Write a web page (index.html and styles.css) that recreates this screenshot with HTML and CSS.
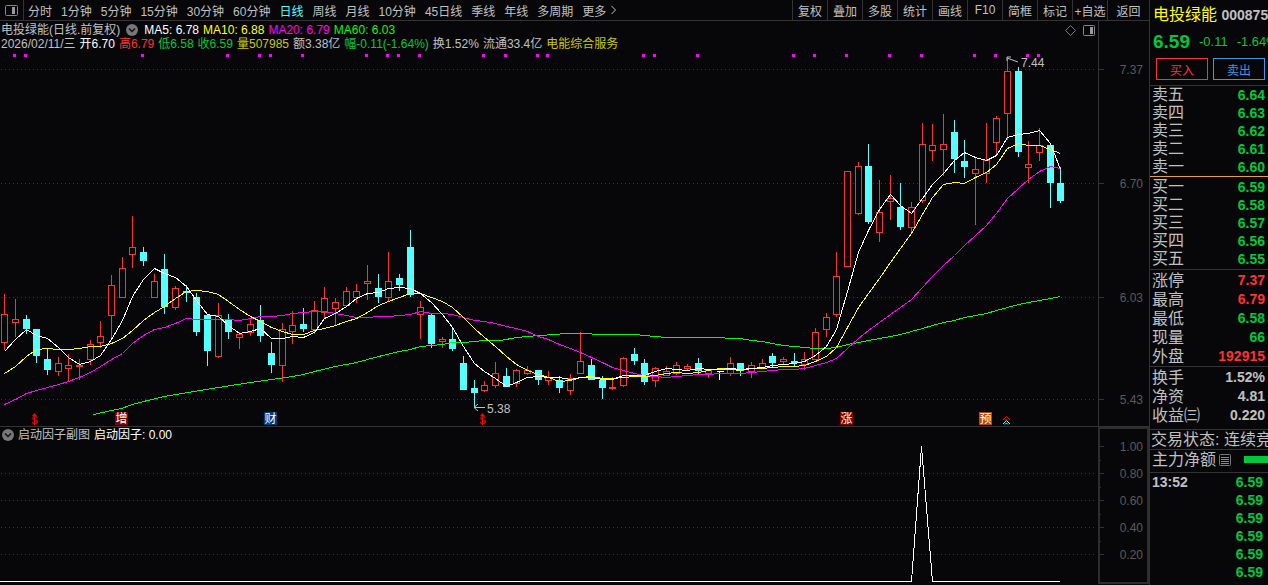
FILE: index.html
```html
<!DOCTYPE html>
<html lang="zh-CN">
<head>
<meta charset="UTF-8">
<meta name="viewport" content="width=device-width, initial-scale=1.0">
<title>电投绿能 000875</title>
<link rel="stylesheet" href="styles.css">
</head>

<body>
    <main>
        <nav class="toolbar">
            <button class="panel-toggle" aria-label="侧栏">
                <svg width="13" height="11" viewBox="0 0 13 11"><rect x="0.5" y="0.5" width="12" height="10" rx="1" fill="none" stroke="#888"/><rect x="7" y="2" width="3" height="7" fill="#999"/></svg>
            </button>
            <div class="periods">
                <button>分时</button>
                <button>1分钟</button>
                <button>5分钟</button>
                <button>15分钟</button>
                <button>30分钟</button>
                <button>60分钟</button>
                <button class="active">日线</button>
                <button>周线</button>
                <button>月线</button>
                <button>10分钟</button>
                <button>45日线</button>
                <button>季线</button>
                <button>年线</button>
                <button>多周期</button>
                <button>更多 <svg width="7" height="10" viewBox="0 0 7 10"><path d="M1.5 1L5.5 5L1.5 9" fill="none" stroke="#c0c0c0"/></svg></button>
            </div>
            <div class="tools">
                <button>复权</button>
                <button>叠加</button>
                <button>多股</button>
                <button>统计</button>
                <button>画线</button>
                <button>F10</button>
                <button>简框</button>
                <button>标记</button>
                <button>+自选</button>
                <button class="back">返回</button>
            </div>
        </nav>

        <section class="panel price-panel">
            <div class="plot">
                <div class="info">
                    <div class="info-row averages">
                        <span>电投绿能(日线.前复权)</span>
                        <svg class="chevron" width="12" height="12" viewBox="0 0 12 12"><circle cx="6" cy="6" r="6" fill="#777"/><path d="M3 4.5L6 7.5L9 4.5" fill="none" stroke="#111" stroke-width="1.5"/></svg>
                        <span class="white">MA5: 6.78</span>
                        <span class="yellow">MA10: 6.88</span>
                        <span class="magenta">MA20: 6.79</span>
                        <span class="lime">MA60: 6.03</span>
                        <span class="corner">
                            <svg width="11" height="11" viewBox="0 0 11 11"><path d="M5.5 0.5L10.5 5.5L5.5 10.5L0.5 5.5Z" fill="none" stroke="#777"/></svg>
                            <svg width="12" height="11" viewBox="0 0 12 11"><rect x="0.5" y="0.5" width="11" height="10" rx="1" fill="none" stroke="#888"/><rect x="7" y="2" width="3" height="7" fill="#999"/></svg>
                        </span>
                    </div>
                    <div class="info-row">
                        <span>2026/02/11/三</span>
                        <span class="white">开6.70</span>
                        <span class="red">高6.79</span>
                        <span class="green">低6.58</span>
                        <span class="green">收6.59</span>
                        <span class="gold">量507985</span>
                        <span>额3.38亿</span>
                        <span class="green">幅-0.11(-1.64%)</span>
                        <span>换1.52%</span>
                        <span>流通33.4亿</span>
                        <span class="gold">电能综合服务</span>
                    </div>
                </div>
                <svg class="chart" viewBox="0 51 1098 375">
                    <g class="grid">
                        <path d="M1 69.5H1095M1 183.5H1095M1 297.5H1095M1 399.5H1095"/>
                    </g>
                    <g id="events"></g>
                    <g id="candles"></g>
                    <g id="averages"></g>

                    <g class="note">
                        <path d="M1018 62L1007 58M1007 61V57H1011"/>
                        <text x="1021" y="67">7.44</text>
                        <path d="M485 407.5H474M478 404L474 407.5L478 411"/>
                        <text x="487" y="413">5.38</text>
                    </g>

                    <!-- event marks -->
                    <g class="dollar">
                        <path d="M34.5 413L37 416H32Z"/>
                        <text x="34.5" y="424">S</text>
                        <path d="M34 416h1v9h-1z"/>
                        <path d="M482.5 413L485 416H480Z"/>
                        <text x="482.5" y="424">S</text>
                        <path d="M482 416h1v9h-1z"/>
                    </g>
                    <g class="mark">
                        <rect x="115" y="412" width="13" height="13" fill="#800000"/>
                        <text x="121.5" y="423">增</text>
                        <rect x="264" y="412" width="13" height="13" fill="#003c78"/>
                        <text x="270.5" y="423">财</text>
                        <rect x="840" y="412" width="13" height="13" fill="#800000"/>
                        <text x="846.5" y="423">涨</text>
                        <rect x="979" y="412" width="13" height="13" fill="#b8430d"/>
                        <text x="985.5" y="423">预</text>
                    </g>
                    <path d="M1003 420L1006.5 416.5L1010 420M1005 420.5L1006.5 419L1008 420.5" fill="none" stroke="#f00"/>
                    <path d="M1003 424L1006.5 420.5L1010 424M1005 424.5L1006.5 423L1008 424.5" fill="none" stroke="#54ffff"/>
                </svg>
            </div>
            <div class="axis">
                <svg viewBox="1099 21 50 405">
                    <path class="tick" d="M1099 69.5h5M1099 183.5h5M1099 297.5h5M1099 399.5h5"/>
                    <text x="1143" y="74">7.37</text>
                    <text x="1143" y="188">6.70</text>
                    <text x="1143" y="302">6.03</text>
                    <text x="1143" y="404">5.43</text>
                </svg>
            </div>
        </section>

        <section class="panel sub-panel">
            <div class="plot">
                <div class="info-row averages">
                    <svg class="chevron" width="12" height="12" viewBox="0 0 12 12"><circle cx="6" cy="6" r="6" fill="#777"/><path d="M3 4.5L6 7.5L9 4.5" fill="none" stroke="#111" stroke-width="1.5"/></svg>
                    <span>启动因子副图</span>
                    <span class="white">启动因子: 0.00</span>
                </div>
                <svg class="chart" viewBox="0 443 1098 142">
                    <g class="grid">
                        <path d="M1 473.5H1095M1 500.5H1095M1 527.5H1095M1 554.5H1095"/>
                    </g>
                    <polyline class="line ma5" points="0,581.5 911.5,581.5 921.5,446.5 932.5,581.5 1060,581.5"/>
                </svg>
            </div>
            <div class="axis boxed">
                <svg viewBox="1100 429 47 153">
                    <path class="tick" d="M1100 446.5h4M1100 473.5h4M1100 500.5h4M1100 527.5h4M1100 554.5h4M1100 460.5h1M1100 487.5h1M1100 514.5h1M1100 541.5h1"/>
                    <text x="1143" y="451">1.00</text>
                    <text x="1143" y="478">0.80</text>
                    <text x="1143" y="505">0.60</text>
                    <text x="1143" y="532">0.40</text>
                    <text x="1143" y="559">0.20</text>
                </svg>
            </div>
        </section>
    </main>

    <aside>
        <header>
            <h1>电投绿能 <b>000875</b></h1>
            <p class="quote green"><b>6.59</b><span>-0.11</span><span>-1.64%</span></p>
            <div class="trade">
                <button class="buy">买入</button>
                <button class="sell">卖出</button>
            </div>
        </header>
        <table class="asks">
            <tr><th>卖五</th><td>6.64</td></tr>
            <tr><th>卖四</th><td>6.63</td></tr>
            <tr><th>卖三</th><td>6.62</td></tr>
            <tr><th>卖二</th><td>6.61</td></tr>
            <tr><th>卖一</th><td>6.60</td></tr>
        </table>
        <div class="block">
            <table>
                <tr><th>买一</th><td>6.59</td></tr>
                <tr><th>买二</th><td>6.58</td></tr>
                <tr><th>买三</th><td>6.57</td></tr>
                <tr><th>买四</th><td>6.56</td></tr>
                <tr><th>买五</th><td>6.55</td></tr>
            </table>
        </div>
        <table class="stats">
            <tr><th>涨停</th><td class="red">7.37</td></tr>
            <tr><th>最高</th><td class="red">6.79</td></tr>
            <tr><th>最低</th><td>6.58</td></tr>
            <tr><th>现量</th><td>66</td></tr>
            <tr><th>外盘</th><td class="red">192915</td></tr>
        </table>
        <div class="block ratios">
            <table class="stats">
                <tr><th>换手</th><td class="plain">1.52%</td></tr>
                <tr><th>净资</th><td class="plain">4.81</td></tr>
                <tr><th>收益㈢</th><td class="plain">0.220</td></tr>
            </table>
        </div>
        <p class="status">交易状态: 连续竞价</p>
        <div class="flow">
            <span>主力净额</span>
            <svg width="12" height="12" viewBox="0 0 12 12"><rect x="0.5" y="0.5" width="11" height="11" rx="1" fill="none" stroke="#777"/><path d="M2 3.5h8M2 5.5h8M2 7.5h8M2 9.5h8" stroke="#888"/></svg>
            <i class="bar"></i>
        </div>
        <table class="ticks">
            <tr><th>13:52</th><td>6.59</td></tr>
            <tr><th></th><td>6.59</td></tr>
            <tr><th></th><td>6.59</td></tr>
            <tr><th></th><td>6.59</td></tr>
            <tr><th></th><td>6.59</td></tr>
            <tr><th></th><td>6.59</td></tr>
        </table>
    </aside>
    <script src="chart.js"></script>
</body>
</html>
```

FILE: styles.css
```css
* {
    box-sizing: border-box;
}
body {
    display: flex;
    height: 100vh;
    margin: 0;
    overflow: hidden;
    background-color: #070709;
    color: #c0c0c0;
    font-family: "Liberation Sans", "Noto Sans CJK SC", sans-serif;
    font-size: 12px;
}
h1, p {
    margin: 0;
    font-weight: normal;
}
button {
    padding: 0;
    border: 0;
    background: none;
    color: inherit;
    font: inherit;
    white-space: nowrap;
    cursor: pointer;
}
svg {
    display: block;
    flex: none;
}
main {
    flex: 1;
    min-width: 0;
}

/* colours */
.white { color: #fff; }
.yellow { color: #ff0; }
.magenta { color: #f0f; }
.lime { color: #0f0; }
.gold { color: #c8c800; }
.red { color: #ff3232; }
.green { color: #00c83c; }

/* toolbar */
.toolbar {
    display: flex;
    height: 21px;
    border-bottom: 1px solid #333;
}
.panel-toggle {
    width: 24px;
    padding-left: 5px;
    border-right: 1px solid #333;
}
.periods {
    display: flex;
    flex: 1;
    gap: 9px;
    padding-left: 4px;
}
.periods button {
    display: flex;
    align-items: center;
    gap: 4px;
}
.periods .active {
    color: #54ffff;
}
.tools {
    display: flex;
}
.tools button {
    width: 35px;
    border-left: 1px solid #333;
}
.tools .back {
    width: 42px;
}

/* chart panels */
.panel {
    display: flex;
}
.price-panel {
    border-bottom: 1px solid #333;
}
.plot {
    flex: 1;
    min-width: 0;
}
.info {
    padding: 2px 0 0 1px;
}
.info-row {
    display: flex;
    gap: 4px;
    height: 14px;
    line-height: 14px;
    white-space: nowrap;
}
.averages {
    align-items: center;
}
.info .chevron {
    margin: 0 2px;
}
.corner {
    display: flex;
    gap: 7px;
    margin-left: auto;
    padding-right: 3px;
}
.sub-panel .info-row {
    height: 16px;
    padding-left: 2px;
}
.chart {
    width: 100%;
}
.axis {
    width: 51px;
    border-left: 1px solid #333;
}
.boxed {
    align-self: flex-start;
    border: 2px solid #2d2d2d;
}
.axis text {
    fill: #5a5a5a;
    font-size: 12px;
    text-anchor: end;
}
.tick {
    stroke: #333;
}
.grid path {
    stroke: #383838;
    stroke-dasharray: 1 3;
    shape-rendering: crispEdges;
}
.candle {
    shape-rendering: crispEdges;
}
.up {
    fill: #070709;
    stroke: #ff3232;
}
.down {
    fill: #54ffff;
    stroke: #54ffff;
}
.flat {
    stroke: #fff;
}
.event {
    fill: #f0f;
}
.line {
    fill: none;
    shape-rendering: crispEdges;
}
.ma5 { stroke: #fff; }
.ma10 { stroke: #ff0; }
.ma20 { stroke: #f0f; }
.ma60 { stroke: #0f0; }
.note path {
    fill: none;
    stroke: #c0c0c0;
}
.note text {
    fill: #c0c0c0;
    font-size: 12px;
}
.dollar {
    fill: #f00;
    font-size: 10px;
    text-anchor: middle;
}
.mark {
    font-size: 12px;
    text-anchor: middle;
}
.mark text {
    fill: #fff;
}

/* quote sidebar */
aside {
    width: 119px;
    border-left: 1px solid #333;
    overflow: hidden;
    font-size: 16px;
    white-space: nowrap;
}
aside header {
    height: 86px;
    padding-left: 3px;
    border-bottom: 1px solid #333;
}
h1 {
    height: 30px;
    color: #ff0;
    font-size: 16px;
    line-height: 30px;
}
h1 b {
    color: #c0c0c0;
    font-size: 14px;
}
.quote {
    display: flex;
    gap: 9px;
    height: 24px;
    font-size: 13px;
    line-height: 24px;
}
.quote b {
    font-size: 19px;
}
.trade {
    display: flex;
    gap: 5px;
    padding: 4px 3px 0;
    font-size: 12px;
}
.trade button {
    flex: 1;
    height: 22px;
    border: 1px solid;
}
.trade .buy {
    color: #ff3232;
}
.trade .sell {
    color: #3c96e6;
}
table {
    width: 100%;
    border-collapse: collapse;
}
th, td {
    height: 18px;
    padding: 0 3px 0 2px;
    line-height: 18px;
}
th {
    font-weight: normal;
    text-align: left;
}
td {
    color: #00c83c;
    font-size: 14px;
    font-weight: bold;
    text-align: right;
}
td.red {
    color: #ff3232;
}
td.plain {
    color: #c0c0c0;
}
.asks {
    border-bottom: 1px solid #e6a03c;
}
.block {
    padding: 1px 0;
    border-bottom: 1px solid #333;
}
.stats {
    margin-top: 1px;
}
.stats th, .stats td {
    height: 19px;
    line-height: 19px;
}
.ratios {
    padding: 0 0 4px;
    border-top: 1px solid #333;
}
.status {
    height: 20px;
    padding-left: 1px;
    border-bottom: 1px solid #333;
    line-height: 19px;
}
.flow {
    display: flex;
    align-items: center;
    gap: 3px;
    height: 23px;
    padding: 0 0 3px 2px;
    border-bottom: 1px solid #333;
    line-height: 18px;
}
.bar {
    flex: 1;
    height: 7px;
    margin-left: 10px;
    background-color: #00c83c;
}
.ticks th {
    font-size: 14px;
    font-weight: bold;
}
.ticks td {
    padding-right: 5px;
}
```

FILE: chart.js
```js
// [direction, high, body top, body bottom, low], all in viewBox units
const candles = [
  ['up', 294, 314, 343, 350], ['up', 299, 319, 323, 337], ['down', 315, 319, 329, 334], ['down', 329, 329, 356, 363],
  ['down', 349, 359, 370, 375], ['up', 357, 363, 372, 376], ['up', 354, 365, 369, 381], ['up', 359, 365, 367, 380],
  ['up', 340, 344, 360, 365], ['up', 321, 336, 343, 348], ['up', 275, 285, 316, 340], ['up', 257, 268, 298, 298],
  ['up', 216, 247, 255, 268], ['down', 247, 252, 261, 266], ['up', 274, 281, 298, 298], ['down', 254, 269, 307, 314],
  ['up', 286, 288, 308, 310], ['down', 285, 291, 293, 302], ['down', 293, 297, 332, 336], ['down', 315, 315, 351, 366],
  ['up', 303, 315, 357, 358], ['down', 314, 320, 332, 339], ['up', 332, 334, 338, 349], ['up', 320, 324, 333, 336],
  ['down', 305, 320, 336, 342], ['down', 342, 353, 365, 373], ['up', 323, 329, 366, 382], ['up', 311, 325, 332, 344],
  ['down', 308, 324, 329, 332], ['up', 301, 310, 330, 334], ['up', 287, 298, 313, 319], ['up', 298, 302, 309, 326],
  ['up', 287, 291, 306, 306], ['up', 284, 291, 298, 303], ['up', 265, 281, 284, 300], ['down', 274, 288, 297, 303],
  ['up', 252, 281, 298, 301], ['down', 274, 278, 285, 291], ['down', 230, 247, 295, 297], ['up', 301, 307, 315, 339],
  ['down', 314, 315, 344, 348], ['up', 337, 339, 342, 348], ['down', 327, 339, 349, 351], ['down', 356, 363, 390, 390],
  ['down', 380, 388, 393, 407], ['up', 381, 385, 391, 392], ['up', 362, 373, 386, 388], ['down', 368, 376, 387, 387],
  ['up', 369, 370, 384, 387], ['up', 366, 370, 374, 375], ['down', 370, 370, 380, 385], ['up', 371, 377, 381, 385],
  ['down', 376, 380, 388, 393], ['up', 374, 378, 391, 395], ['up', 332, 361, 374, 374], ['down', 359, 365, 380, 380],
  ['down', 376, 380, 388, 399], ['up', 377, 387, 389, 390], ['up', 357, 358, 386, 387], ['down', 348, 354, 361, 365],
  ['down', 359, 363, 382, 385], ['up', 367, 368, 381, 387], ['up', 366, 371, 376, 376], ['up', 362, 365, 374, 375],
  ['up', 364, 366, 369, 370], ['down', 358, 363, 371, 374], ['up', 369, 370, 374, 378], ['flat', 371, 371, 371, 380],
  ['up', 357, 363, 374, 376], ['down', 363, 363, 371, 376], ['up', 362, 365, 372, 378], ['up', 359, 363, 368, 368],
  ['down', 353, 356, 363, 367], ['up', 357, 359, 362, 364], ['down', 353, 361, 363, 366], ['up', 352, 359, 365, 370],
  ['up', 328, 332, 360, 360], ['up', 313, 317, 330, 337], ['up', 252, 276, 315, 317], ['up', 171, 171, 267, 267],
  ['up', 162, 166, 214, 215], ['down', 144, 166, 222, 224], ['up', 180, 212, 233, 242], ['up', 175, 198, 202, 220],
  ['down', 183, 207, 227, 230], ['up', 202, 207, 228, 232], ['up', 123, 144, 201, 203], ['up', 124, 145, 151, 161],
  ['up', 114, 144, 150, 176], ['down', 120, 132, 159, 173], ['down', 140, 161, 167, 178], ['up', 158, 169, 174, 225],
  ['up', 123, 160, 174, 183], ['up', 116, 118, 143, 154], ['up', 59, 71, 114, 140], ['down', 67, 71, 152, 157],
  ['up', 141, 164, 168, 183], ['up', 128, 145, 153, 161], ['down', 145, 145, 183, 208], ['down', 167, 183, 201, 203]
];

// candles that carry a dot above the chart
const events = [1, 2, 13, 21, 24, 25, 28, 34, 36, 37, 39, 45, 47, 50, 51, 60, 61, 65, 74, 76, 79, 83, 86, 91, 93, 96, 97];

// start of each average, where the earlier closes are off the chart
const ma5Start = [351, 339, 329, 335];
const ma10Start = [373, 366, 356, 349, 348, 349, 349, 348, 346];
const ma20Start = [404, 399, 393, 390, 387, 384, 381, 377, 372, 366, 359, 353, 343, 335, 329, 327, 323, 318, 319];
const ma60Start = [
  [93, 414], [111, 410], [121, 408], [132, 404], [143, 401], [164, 396], [218, 387], [250, 382], [271, 379],
  [292, 376], [303, 374], [314, 371], [335, 366], [356, 362], [378, 356], [399, 351], [410, 349], [420, 346],
  [442, 344], [452, 342], [463, 342], [484, 340], [500, 340], [516, 337], [538, 335], [555, 334], [565, 333],
  [586, 333], [597, 334], [623, 334]
];

const centre = i => Math.floor((14 + 32 * i) / 3);
const close = c => (c[0] === 'up' ? c[2] : c[3]);

function add(parent, name, attrs) {
  const el = document.createElementNS('http://www.w3.org/2000/svg', name);
  for (const key in attrs) el.setAttribute(key, attrs[key]);
  document.getElementById(parent).appendChild(el);
}

function average(n, points) {
  for (let i = n - 1; i < candles.length; i++) {
    const sum = candles.slice(i - n + 1, i + 1).reduce((total, c) => total + close(c), 0);
    points.push([centre(i), Math.round(sum / n)]);
  }
  add('averages', 'polyline', {
    class: 'line ma' + n,
    points: points.map(p => (p[0] + 0.5) + ',' + (p[1] + 0.5)).join(' ')
  });
}

candles.forEach(([dir, high, top, bottom, low], i) => {
  const x = centre(i) + 0.5;
  add('candles', 'path', { class: 'candle ' + dir, d: `M${x} ${high}V${top}M${x} ${bottom}V${low}` });
  if (dir === 'flat') {
    add('candles', 'path', { class: 'candle flat', d: `M${x - 3} ${top + 0.5}h7` });
  } else {
    add('candles', 'rect', {
      class: 'candle ' + dir, x: x - 3, y: top + 0.5, width: 6, height: bottom - top - 1
    });
  }
});

events.forEach(i => add('events', 'rect', { class: 'event', x: centre(i) - 2, y: 54, width: 3, height: 3 }));

const seeded = start => start.map((y, i) => [centre(i), y]);
average(60, ma60Start.filter(p => p[0] < centre(59)));
average(20, seeded(ma20Start));
average(10, seeded(ma10Start));
average(5, seeded(ma5Start));
```
